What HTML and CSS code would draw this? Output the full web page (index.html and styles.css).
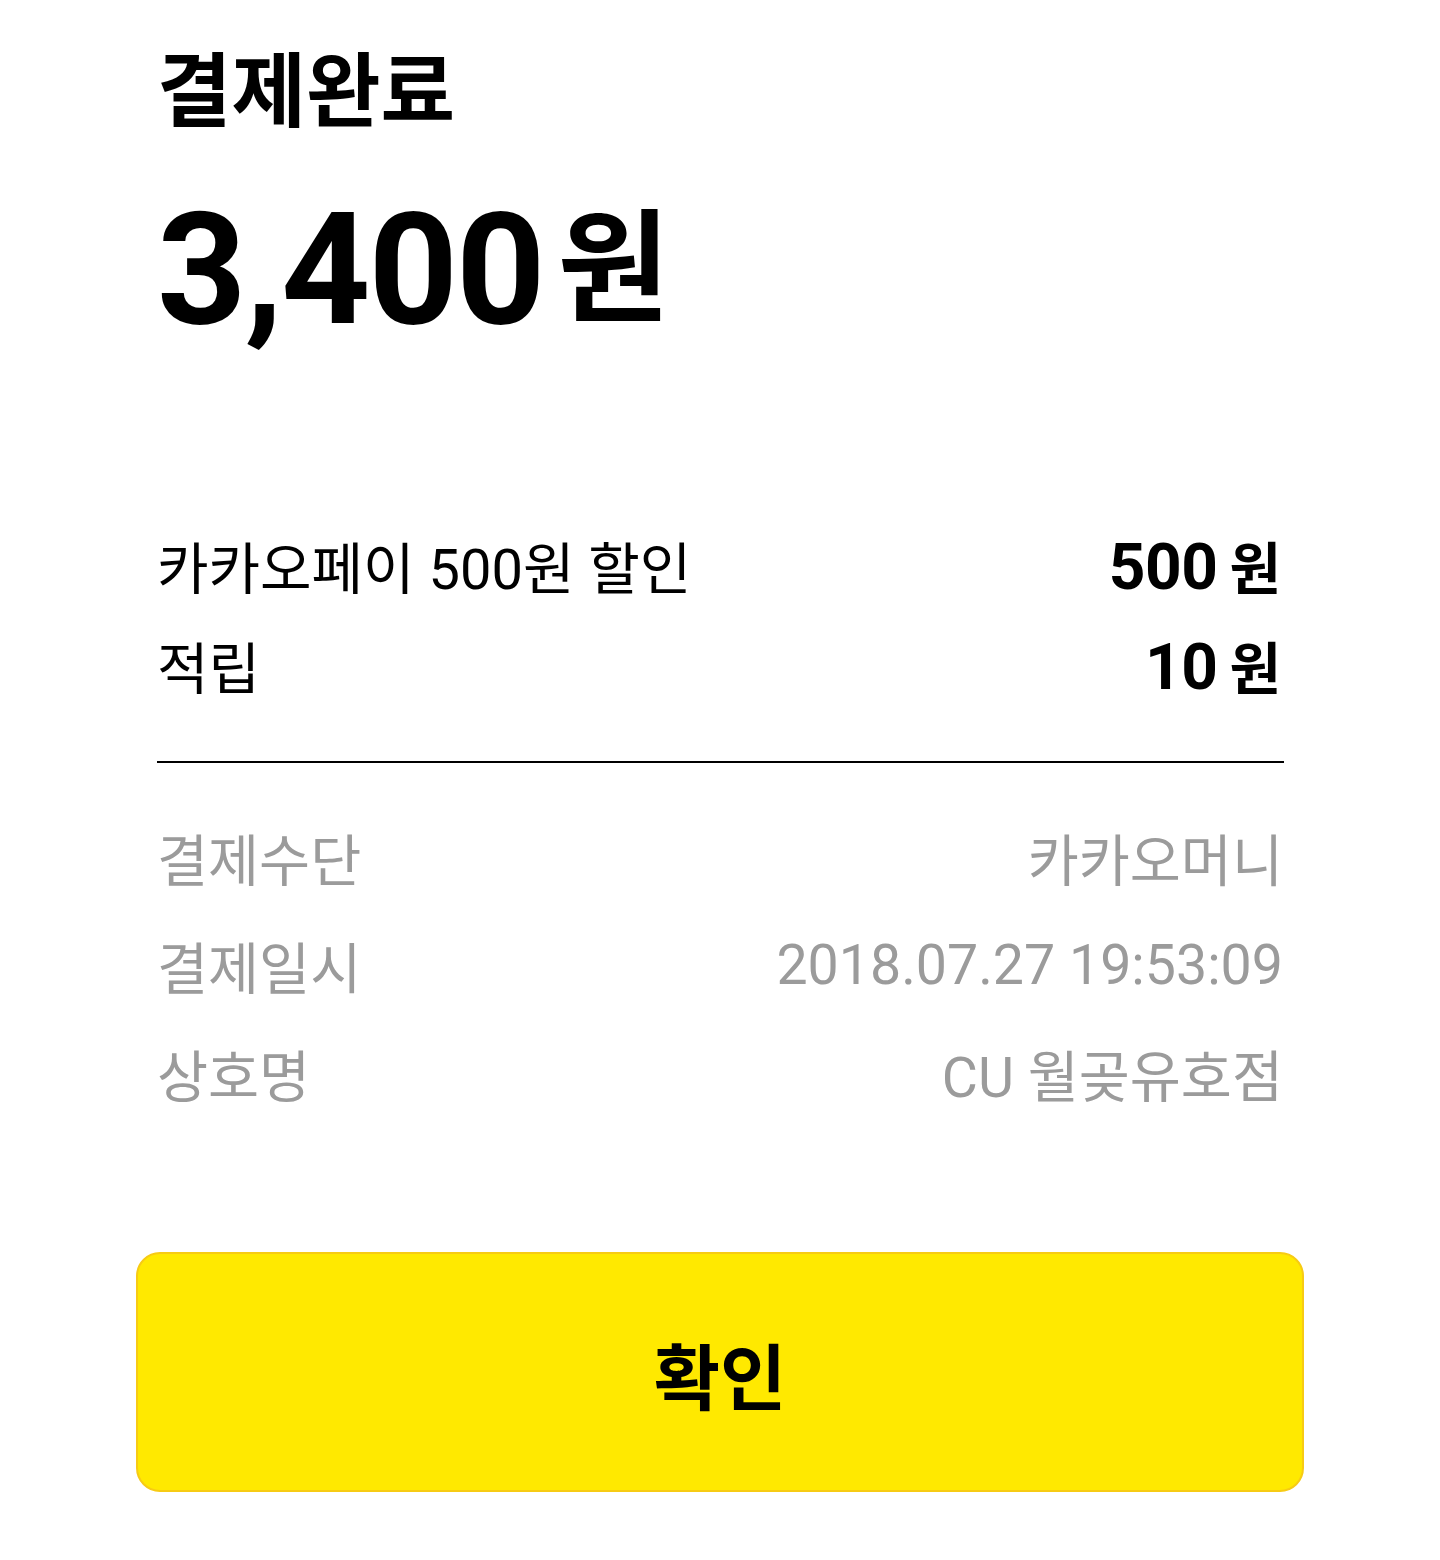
FILE: index.html
```html
<!DOCTYPE html>
<html lang="ko">
<head>
<meta charset="utf-8">
<title>결제완료</title>
<link rel="stylesheet" href="styles.css">
</head>
<body>
<main class="receipt">
  <h1 class="title">결제완료</h1>
  <div class="total"><span class="total-num">3,400</span><span class="total-unit">원</span></div>

  <div class="benefits">
    <div class="benefit-row">
      <span class="benefit-label">카카오페이 500원 할인</span>
      <span class="benefit-value"><span class="value-num">500</span><span class="value-unit">원</span></span>
    </div>
    <div class="benefit-row">
      <span class="benefit-label">적립</span>
      <span class="benefit-value"><span class="value-num">10</span><span class="value-unit">원</span></span>
    </div>
  </div>

  <hr class="divider">

  <div class="details">
    <div class="detail-row"><span class="detail-label">결제수단</span><span class="detail-value">카카오머니</span></div>
    <div class="detail-row"><span class="detail-label">결제일시</span><span class="detail-value">2018.07.27 19:53:09</span></div>
    <div class="detail-row"><span class="detail-label">상호명</span><span class="detail-value">CU 월곶유호점</span></div>
  </div>

  <button class="confirm" type="button">확인</button>
</main>
</body>
</html>
```

FILE: styles.css
```css
* { box-sizing: border-box; }
html, body { margin: 0; padding: 0; background: #ffffff; }
body {
  font-family: "Roboto", "Noto Sans CJK KR", sans-serif;
  color: #000000;
}
.receipt {
  width: 1440px;
  padding: 0 156px 0 157px;
  display: flex;
  flex-direction: column;
}
.title {
  margin: 47px 0 0 0;
  font-size: 81px;
  line-height: 92px;
  font-weight: 700;
}
.total {
  margin-top: 51px;
  line-height: 160px;
  height: 160px;
  white-space: nowrap;
}
.total-num {
  font-size: 156px;
  font-weight: 700;
  letter-spacing: -2px;
}
.total-unit {
  font-size: 122px;
  font-weight: 700;
  margin-left: 14px;
  vertical-align: 12px;
}
.benefits {
  margin-top: 180px;
  display: flex;
  flex-direction: column;
  gap: 32px;
}
.benefit-row {
  display: flex;
  justify-content: space-between;
  align-items: center;
  height: 68px;
}
.benefit-label {
  font-size: 56px;
  font-weight: 400;
}
.benefit-value {
  font-size: 64px;
  font-weight: 700;
  padding-right: 3px;
  white-space: nowrap;
}
.value-num { letter-spacing: -0.5px; }
.value-unit {
  font-size: 56px;
  font-weight: 700;
  margin-left: 12px;
}
.divider {
  margin: 63px 0 0 0;
  border: 0;
  border-top: 2px solid #000000;
  width: 100%;
}
.details {
  margin-top: 60px;
  display: flex;
  flex-direction: column;
  gap: 40px;
}
.detail-row {
  display: flex;
  justify-content: space-between;
  align-items: center;
  height: 68px;
  color: #9b9b9b;
  font-size: 55.5px;
}
.detail-value { padding-right: 1px; }
.confirm {
  margin: 145px -20px 0 -21px;
  height: 240px;
  background: #ffe900;
  border: 2px solid #f7cb14;
  border-radius: 24px;
  font-family: "Roboto", "Noto Sans CJK KR", sans-serif;
  font-size: 72px;
  font-weight: 700;
  color: #000000;
}
```
